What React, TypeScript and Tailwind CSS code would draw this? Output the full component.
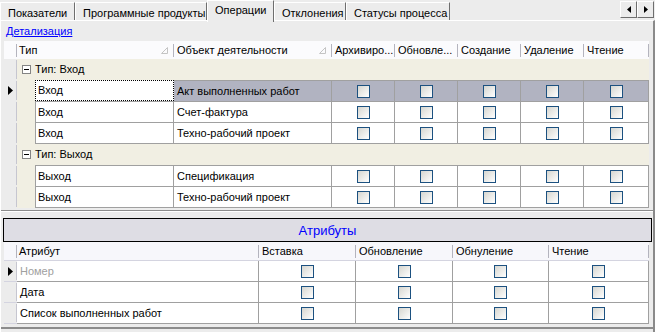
import React from "react";

const CB = () => (
  <span className="block w-[13px] h-[13px] border border-[#1C5180] bg-linear-to-br from-[#D6D6D0] to-white" />
);

const SortGlyph = () => (
  <svg width="7" height="7" viewBox="0 0 7 7" className="shrink-0">
    <path d="M0.5 6.5 L6.5 0.5 L6.5 6.5 Z" fill="none" stroke="#C4C4C4" strokeWidth="1" />
  </svg>
);

const Arrow = () => (
  <svg width="5" height="9" viewBox="0 0 5 9">
    <path d="M0 0 L5 4.5 L0 9 Z" fill="#000" />
  </svg>
);

const Sep = () => <span className="block w-px h-[13px] bg-[#B4B4BE] shrink-0" />;

function Tab({ label, w, active }: { label: string; w: string; active?: boolean }) {
  if (active) {
    return (
      <div
        className={`${w} h-[22px] -mb-[2px] bg-[#ECECEC] border-l border-t border-white border-r border-r-[#6E6E6E] flex items-start pt-[4px] pl-[7px] shrink-0`}
      >
        {label}
      </div>
    );
  }
  return (
    <div
      className={`${w} h-[18px] bg-[#ECECEC] border-l border-t border-white border-r border-r-[#6E6E6E] flex items-start pt-[5px] pl-[7px] shrink-0`}
    >
      {label}
    </div>
  );
}

function ScrollBtn({ dir }: { dir: "l" | "r" }) {
  return (
    <div className="w-[17px] h-[17px] bg-[#ECECEC] border-l border-t border-white border-r border-b border-r-[#6E6E6E] border-b-[#6E6E6E] flex items-center justify-center">
      <svg width="4" height="7" viewBox="0 0 4 7">
        {dir === "l" ? <path d="M4 0 L0 3.5 L4 7 Z" fill="#000" /> : <path d="M0 0 L4 3.5 L0 7 Z" fill="#000" />}
      </svg>
    </div>
  );
}

function Selector({ arrow, h }: { arrow?: boolean; h: string }) {
  return (
    <div className={`w-[13px] ${h} shrink-0 flex items-stretch`}>
      <div className="w-[12px] flex items-center justify-center">{arrow ? <Arrow /> : null}</div>
      <div className="w-px my-[1px] bg-[#C6C6D0]" />
    </div>
  );
}

const cbW = ["w-[63px]", "w-[63px]", "w-[63px]", "w-[63px]", "w-[65px]"];

function TopRow({
  tip,
  obj,
  selected,
  focused,
  last,
}: {
  tip: string;
  obj: string;
  selected?: boolean;
  focused?: boolean;
  last?: boolean;
}) {
  const h = last ? "h-[22px]" : "h-[21px]";
  const bb = last ? "border-b" : "";
  const sel = selected ? "bg-[#B1B3C1]" : "bg-white";
  return (
    <div className={`flex ${h}`}>
      <Selector arrow={selected} h={h} />
      <div className="w-[18px] bg-[#F1EFE3] shrink-0" />
      {focused ? (
        <div className={`w-[139px] shrink-0 bg-white border border-dotted border-black flex items-center pl-[2px]`}>
          {tip}
        </div>
      ) : (
        <div className={`w-[139px] shrink-0 bg-white border-l border-t border-r ${bb} border-[#A0A0A0] flex items-center pl-[2px]`}>
          {tip}
        </div>
      )}
      <div className={`w-[158px] shrink-0 ${sel} border-t border-r ${bb} border-[#A0A0A0] flex items-center pl-[3px]`}>
        {obj}
      </div>
      {cbW.map((w, i) => (
        <div key={i} className={`${w} shrink-0 ${sel} border-t border-r ${bb} border-[#A0A0A0] flex items-center justify-center`}>
          <CB />
        </div>
      ))}
    </div>
  );
}

function GroupRow({ label, h }: { label: string; h: string }) {
  return (
    <div className={`flex ${h}`}>
      <Selector h={h} />
      <div className="flex-1 bg-[#F1EFE3] flex items-center pl-[5px]">
        <span className="w-[9px] h-[9px] border border-[#848484] bg-white flex items-center justify-center shrink-0">
          <span className="block w-[5px] h-px bg-black" />
        </span>
        <span className="ml-[4px]">{label}</span>
      </div>
    </div>
  );
}

const botW = ["w-[97px]", "w-[97px]", "w-[96px]", "w-[100px]"];

function BotRow({ label, gray, arrow }: { label: string; gray?: boolean; arrow?: boolean }) {
  return (
    <div className="flex h-[21px]">
      <div className="w-[13px] h-[21px] shrink-0 flex items-stretch border-b border-[#D4D4E0]">
        <div className="w-[12px] flex items-center justify-center">{arrow ? <Arrow /> : null}</div>
        <div className="w-px my-[1px] bg-[#C6C6D0]" />
      </div>
      <div className={`w-[242px] shrink-0 bg-white border-r border-b border-[#A0A0A0] flex items-center pl-[3px] ${gray ? "text-[#A0A0A0]" : ""}`}>
        {label}
      </div>
      {botW.map((w, i) => (
        <div key={i} className={`${w} shrink-0 bg-white border-r border-b border-[#A0A0A0] flex items-center justify-center`}>
          <CB />
        </div>
      ))}
    </div>
  );
}

export default function App() {
  return (
    <div className="w-[655px] h-[332px] overflow-hidden bg-[#ECECEC] font-['Liberation_Sans',Arial,sans-serif] text-[11px] leading-none text-black">
      {/* tab strip */}
      <div className="relative z-10 flex items-end h-[20px]">
        <Tab label="Показатели" w="w-[75px]" />
        <Tab label="Программные продукты" w="w-[132px]" />
        <Tab label="Операции" w="w-[67px]" active />
        <Tab label="Отклонения" w="w-[72px]" />
        <Tab label="Статусы процесса" w="w-[104px]" />
        <div className="ml-auto self-start mt-[1px] flex mr-[1px]">
          <ScrollBtn dir="l" />
          <ScrollBtn dir="r" />
        </div>
      </div>
      {/* page */}
      <div className="h-[312px] border-t border-l border-white border-r-2 border-r-[#8A8A8A] pl-[3px] pr-[1px] flex flex-col">
        <div className="h-[20px] flex items-center pl-[2px]">
          <span className="text-[#0000FF] underline">Детализация</span>
        </div>
        {/* top grid */}
        <div className="w-[647px] flex flex-col">
          <div className="w-[645px] h-[18px] bg-[#FBFBFD] flex items-center">
            <div className="w-[12px] shrink-0" />
            <div className="w-[157px] shrink-0 flex items-center">
              <Sep />
              <span className="ml-[2px] flex-1">Тип</span>
              <span className="mr-[5px]"><SortGlyph /></span>
            </div>
            <div className="w-[158px] shrink-0 flex items-center">
              <Sep />
              <span className="ml-[3px] flex-1">Объект деятельности</span>
              <span className="mr-[5px]"><SortGlyph /></span>
            </div>
            {["Архивиро...", "Обновле...", "Создание", "Удаление", "Чтение"].map((t, i) => (
              <div key={i} className={`${cbW[i]} shrink-0 flex items-center`}>
                <Sep />
                <span className="ml-[3px] whitespace-nowrap">{t}</span>
              </div>
            ))}
            <Sep />
          </div>
          <div className="w-[645px] flex flex-col">
            <GroupRow label="Тип: Вход" h="h-[21px]" />
            <TopRow tip="Вход" obj="Акт выполненных работ" selected focused />
            <TopRow tip="Вход" obj="Счет-фактура" />
            <TopRow tip="Вход" obj="Техно-рабочий проект" last />
            <GroupRow label="Тип: Выход" h="h-[21px]" />
            <TopRow tip="Выход" obj="Спецификация" />
            <TopRow tip="Выход" obj="Техно-рабочий проект" last />
          </div>
        </div>
        {/* splitter */}
        <div className="h-[10px] -ml-[3px] -mr-[1px] pt-[2px]">
          <div className="h-[2px] border-t border-[#8C8C8C] border-b border-b-white" />
        </div>
        {/* panel */}
        <div className="-ml-[1px] w-[649px] h-[24px] border border-black bg-[#DEDDE4] flex items-center justify-center text-[13px] text-[#0000FF]">
          Атрибуты
        </div>
        {/* bottom grid */}
        <div className="w-[647px] flex flex-col">
          <div className="w-[645px] h-[19px] bg-[#F7F7FB] flex items-center border-b border-[#D4D4E0]">
            <div className="w-[12px] shrink-0" />
            <div className="w-[242px] shrink-0 flex items-center">
              <Sep />
              <span className="ml-[2px]">Атрибут</span>
            </div>
            {["Вставка", "Обновление", "Обнуление", "Чтение"].map((t, i) => (
              <div key={i} className={`${botW[i]} shrink-0 flex items-center`}>
                <Sep />
                <span className="ml-[3px]">{t}</span>
              </div>
            ))}
            <Sep />
          </div>
          <BotRow label="Номер" gray arrow />
          <BotRow label="Дата" />
          <BotRow label="Список выполненных работ" />
        </div>
        <div className="h-[3px]" />
        <div className="-ml-[3px] -mr-[1px] h-[2px] bg-[#8C8C8C]" />
      </div>
    </div>
  );
}
